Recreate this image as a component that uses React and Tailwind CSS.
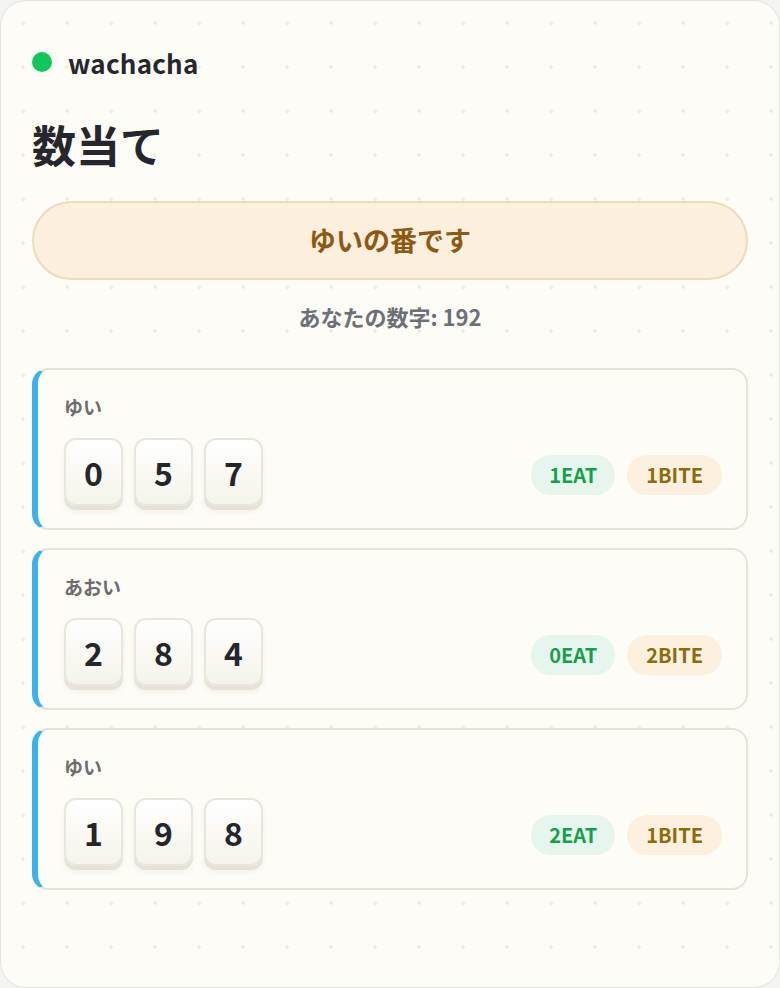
import React from 'react';

const guesses = [
  { id: 1, name: 'ゆい', digits: ['0', '5', '7'], eat: 1, bite: 1 },
  { id: 2, name: 'あおい', digits: ['2', '8', '4'], eat: 0, bite: 2 },
  { id: 3, name: 'ゆい', digits: ['1', '9', '8'], eat: 2, bite: 1 },
];

const DigitTile = ({ value }) => (
  <div className="w-[59px] h-[68px] flex items-center justify-center rounded-xl border-2 border-[#e9e6dd] bg-gradient-to-b from-white to-[#f6f3ea] shadow-[0_4px_0_#e6e2d6,0_6px_6px_rgba(0,0,0,0.05)] text-[32px] font-bold text-[#24262b]">
    {value}
  </div>
);

const GuessCard = ({ guess }) => (
  <div className="bg-[#fdfcf7] border-2 border-[#e6e3da] border-l-[6px] border-l-[#3eb1ea] rounded-2xl pl-[26px] pr-[24px] pt-[23px] pb-[22px]">
    <div className="text-[19px] font-bold text-[#6d6d70] leading-7">{guess.name}</div>
    <div className="mt-[17px] flex items-center justify-between">
      <div className="flex gap-[11px]">
        {guess.digits.map((d, i) => (
          <DigitTile key={i} value={d} />
        ))}
      </div>
      <div className="flex gap-3 mt-[6px]">
        <span className="h-10 px-[18px] flex items-center rounded-full bg-[#e6f6ec] text-[#17a04c] text-[20px] font-bold">
          {guess.eat}EAT
        </span>
        <span className="h-10 px-[19px] flex items-center rounded-full bg-[#fdf0de] text-[#8c6c0b] text-[20px] font-bold">
          {guess.bite}BITE
        </span>
      </div>
    </div>
  </div>
);

const App = () => {
  return (
    <div
      className="bg-[#f4f4f2] min-h-[988px]"
      style={{ fontFamily: '"Noto Sans CJK JP", "Noto Sans", sans-serif' }}
    >
      <div className="w-[780px] h-[988px] rounded-[26px] border border-[#e2e2de] bg-[#fdfcf7] bg-[radial-gradient(circle,#efede6_1.6px,transparent_1.8px)] bg-[length:44px_44px] px-[31px] pt-[45px]">
        {/* Header */}
        <div className="flex items-center gap-4 h-8">
          <span className="w-5 h-5 rounded-full bg-[#0fc75a]" />
          <span className="text-[26px] font-bold text-[#25272c] tracking-[0.2px]">wachacha</span>
        </div>

        <h1 className="mt-[38px] text-[44px] leading-[56px] font-bold text-[#25272c]">数当て</h1>

        {/* Turn banner */}
        <div className="mt-[29px] h-[79px] rounded-full border-2 border-[#eedcb9] bg-[#fcefdd] flex items-center justify-center">
          <span className="text-[27px] font-bold text-[#8d5a13]">ゆいの番です</span>
        </div>

        <p className="mt-[20px] text-center text-[22px] font-bold text-[#6e7078] leading-8">
          あなたの数字: 192
        </p>

        {/* Guess history */}
        <div className="mt-[36px] flex flex-col gap-[18px]">
          {guesses.map((g) => (
            <GuessCard key={g.id} guess={g} />
          ))}
        </div>
      </div>
    </div>
  );
};

export default App;
